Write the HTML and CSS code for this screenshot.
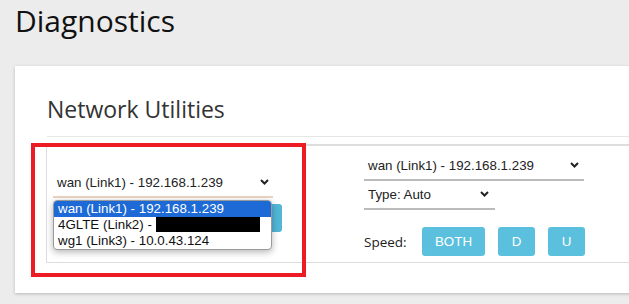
FILE: index.html
```html
<!DOCTYPE html>
<html lang="en">
<head>
    <meta charset="UTF-8">
    <title>Diagnostics</title>
    <link rel="stylesheet" href="styles.css">
</head>
<body>
<h1 class="page-title">Diagnostics</h1>
<div class="card">
    <h2 class="card-title">Network Utilities</h2>
    <hr class="divider">
    <div class="tool-box">
        <!-- ping / traceroute side -->
        <div class="tool-col tool-left">
            <div class="select-wrap">
                <div class="fake-select focused wide">
                    <span>wan (Link1) - 192.168.1.239</span>
                    <svg class="chev" width="9" height="6" viewBox="0 0 9 6"><path d="M1 1l3.5 3.5L8 1" fill="none" stroke="#222" stroke-width="2"/></svg>
                </div>
                <ul class="dropdown">
                    <li class="active">wan (Link1) - 192.168.1.239</li>
                    <li>4GLTE (Link2) - <span class="redact"></span></li>
                    <li>wg1 (Link3) - 10.0.43.124</li>
                </ul>
            </div>
            <button class="btn btn-info btn-block">Run</button>
        </div>
        <!-- speed test side -->
        <div class="tool-col tool-right">
            <div class="fake-select wide">
                <span>wan (Link1) - 192.168.1.239</span>
                <svg class="chev" width="9" height="6" viewBox="0 0 9 6"><path d="M1 1l3.5 3.5L8 1" fill="none" stroke="#222" stroke-width="2"/></svg>
            </div>
            <div class="fake-select short">
                <span>Type: Auto</span>
                <svg class="chev" width="9" height="6" viewBox="0 0 9 6"><path d="M1 1l3.5 3.5L8 1" fill="none" stroke="#222" stroke-width="2"/></svg>
            </div>
            <div class="speed-row">
                <span class="speed-label">Speed:</span>
                <button class="btn btn-info btn-both">BOTH</button>
                <button class="btn btn-info btn-one">D</button>
                <button class="btn btn-info btn-one">U</button>
            </div>
        </div>
    </div>
</div>
<div class="mark"></div>
</body>
</html>
```

FILE: styles.css
```css
*{margin: 0;padding: 0;box-sizing: border-box;}
html, body {
    overflow: hidden;
}
body {
    background: #ececec;
    font-family: "Open Sans", "Noto Sans", sans-serif;
    color: #222;
    width: 629px;
    height: 304px;
}
.page-title {
    font-size: 30px;
    font-weight: normal;
    line-height: 40px;
    padding: 1px 0 0 15px;
    height: 42px;
    color: #111;
}
/*========card========*/
.card {
    margin: 24px 0 0 15px;
    width: 700px;
    height: 227px;
    background: #fff;
    box-shadow: 0 1px 3px rgba(0,0,0,.22);
    padding: 26px 0 0 32px;
}
.card-title {
    font-size: 23px;
    font-weight: normal;
    line-height: 34px;
    color: #333;
}
.divider {
    border: none;
    border-top: 1px solid #e6e6e6;
    margin: 10px 0 0 0;
}
/*========tool box========*/
.tool-box {
    margin: 7px 0 0 -1px;
    border: 1px solid #ddd;
    border-top: 2px solid #ddd;
    border-right: none;
    height: 119px;
    display: grid;
    grid-template-columns: 311px 1fr;
}
.tool-left {
    padding: 23px 0 0 6px;
}
.tool-right {
    padding: 6px 0 0 6px;
}
.select-wrap {
    position: relative;
}
.fake-select {
    display: flex;
    align-items: center;
    justify-content: space-between;
    height: 29px;
    padding: 0 5px 1px 4px;
    border-bottom: 2px solid #bbb;
    font-family: "Liberation Sans", Arial, sans-serif;
    font-size: 13.33px;
    color: #222;
}
.fake-select.focused {
    border-bottom-color: #ecd4c2;
    padding-right: 4px;
}
.fake-select.wide {
    width: 220px;
}
.fake-select.short {
    width: 131px;
    padding-right: 6px;
}
.chev {
    display: block;
}
/*========open list========*/
.dropdown {
    position: absolute;
    top: 31px;
    left: 0;
    width: 219px;
    height: 50px;
    list-style: none;
    background: #fff;
    border: 1px solid #9a9a9a;
    border-radius: 4px;
    box-shadow: 0 2px 7px rgba(0,0,0,.3);
    overflow: hidden;
    z-index: 2;
    font-family: "Liberation Sans", Arial, sans-serif;
    font-size: 13.33px;
    color: #111;
}
.dropdown li {
    height: 16px;
    line-height: 16px;
    padding-left: 4px;
    white-space: nowrap;
}
.dropdown li.active {
    background: #1d6ad6;
    color: #fff;
}
.redact {
    display: inline-block;
    width: 104px;
    height: 15px;
    background: #000;
    vertical-align: -3px;
}
/*========buttons========*/
.btn {
    border: none;
    border-radius: 3px;
    font-family: "Liberation Sans", Arial, sans-serif;
    font-size: 13.33px;
    color: #fff;
    height: 29px;
}
.btn-info {
    background: #5bc0de;
}
.btn-block {
    display: block;
    width: 229px;
    height: 28px;
    margin-top: 6px;
    background: #53b6d6;
}
.speed-row {
    display: flex;
    align-items: center;
    margin-top: 17px;
}
.speed-label {
    font-size: 13.5px;
    width: 58px;
    color: #222;
}
.btn-both {
    width: 63px;
}
.btn-one {
    width: 37px;
    margin-left: 13px;
}
/*========annotation========*/
.mark {
    position: absolute;
    left: 31px;
    top: 143px;
    width: 275px;
    height: 134px;
    border: 4px solid #ed1c24;
    z-index: 5;
}
```
